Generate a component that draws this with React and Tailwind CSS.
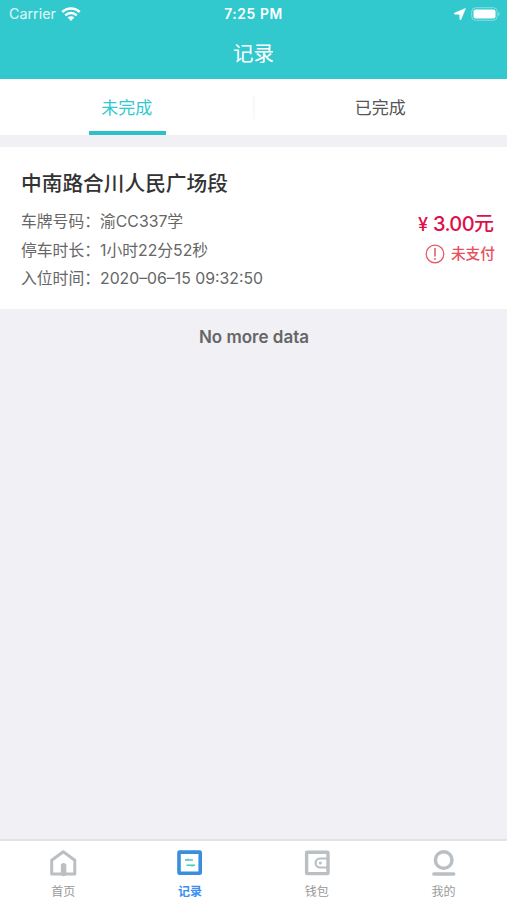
import React, { useState } from "react";

const WifiIcon = () => (
  <svg width="20" height="14" viewBox="0 0 20 14" fill="none" stroke="currentColor" strokeWidth="2.5">
    <path d="M1.3 5a12.3 12.3 0 0 1 17.4 0"></path>
    <path d="M4.3 8.3a8 8 0 0 1 11.4 0"></path>
    <path d="M6.7 10.6a4.7 4.7 0 0 1 6.6 0L10 13.9z" fill="currentColor" stroke="none"></path>
  </svg>
);

const LocationIcon = () => (
  <svg width="12" height="12" viewBox="0 0 12 12" fill="currentColor">
    <path d="M11.7 0.3 0.4 5c-.5.3-.4 1.2.2 1.2l5 .2.2 5c0 .6.9.7 1.2.2z" stroke="currentColor" strokeWidth="0.4"></path>
  </svg>
);

const BatteryIcon = () => (
  <svg width="30" height="14" viewBox="0 0 30 14" fill="none">
    <rect x="0.7" y="0.7" width="25.6" height="12.6" rx="4" stroke="#fff" strokeOpacity="0.4"></rect>
    <rect x="2.5" y="2.5" width="22" height="9" rx="2" fill="#fff"></rect>
    <path d="M27.5 5c1.6.6 1.6 3.4 0 4z" fill="#fff" fillOpacity="0.5"></path>
  </svg>
);

const WarningIcon = () => (
  <svg width="20" height="20" viewBox="0 0 20 20" fill="none" stroke="#e8505b" strokeWidth="1.2">
    <circle cx="10" cy="10" r="8.8"></circle>
    <path d="M10 4v8.5" strokeWidth="1.5"></path>
    <circle cx="10" cy="14.9" r="0.9" fill="#e8505b" stroke="none"></circle>
  </svg>
);

const HomeIcon = () => (
  <svg width="28" height="28" viewBox="0 0 28 28" fill="none" stroke="#b9bfc3" strokeWidth="3" strokeLinejoin="round">
    <path d="M2.7 11.2 14.3 2.8l11.5 8.4V25H2.7z"></path>
    <path d="M14.6 24.5v-7.8" strokeWidth="5.5" strokeLinecap="round"></path>
  </svg>
);

const RecordIcon = () => (
  <svg width="28" height="28" viewBox="0 0 28 28" fill="none">
    <rect x="3" y="3.1" width="21.2" height="21.2" rx="0.5" stroke="#3a8fdc" strokeWidth="3.6"></rect>
    <path d="M9 11h8" stroke="#45cbb9" strokeWidth="1.5"></path>
    <path d="M9 11l3.5-1.700v1.700z" fill="#45cbb9"></path>
    <path d="M10.500 16.200h8.500" stroke="#45cbb9" strokeWidth="1.5"></path>
    <path d="M19 16.200l-3.500 1.900v-1.900z" fill="#45cbb9"></path>
  </svg>
);

const WalletIcon = () => (
  <svg width="28" height="28" viewBox="0 0 28 28" fill="none" stroke="#b9bfc3">
    <rect x="3.6" y="3.2" width="21.4" height="21.4" rx="0.5" strokeWidth="3.4"></rect>
    <path d="M25 9.5h-7.900a4.500 4.500 0 0 0 0 9h7.900" strokeWidth="2.2"></path>
    <circle cx="17.3" cy="14" r="1.6" fill="#b9bfc3" stroke="none"></circle>
  </svg>
);

const UserIcon = () => (
  <svg width="28" height="28" viewBox="0 0 28 28" fill="none" stroke="#b9bfc3" strokeWidth="3.5">
    <circle cx="13.7" cy="11" r="8.3"></circle>
    <path d="M3.900 25h19.800" strokeLinecap="round"></path>
  </svg>
);

const tabs = ["未完成", "已完成"];

const navItems = [
  { label: "首页", icon: HomeIcon },
  { label: "记录", icon: RecordIcon },
  { label: "钱包", icon: WalletIcon },
  { label: "我的", icon: UserIcon },
];

const details = [
  { label: "车牌号码：", value: "渝CC337学" },
  { label: "停车时长：", value: "1小时22分52秒" },
  { label: "入位时间：", value: "2020–06–15 09:32:50" },
];

const App = () => {
  const [tab, setTab] = useState("未完成");
  const [page, setPage] = useState("记录");

  return (
    <div className="flex h-screen w-full flex-col overflow-hidden bg-[#f0f0f5] font-['Inter','Noto_Sans_CJK_SC',sans-serif] text-[#555]">
      {/* Header */}
      <header className="h-[79px] shrink-0 bg-[#31c9ce] text-white">
        <div className="grid h-[27px] grid-cols-[1fr_auto_1fr] items-center pl-[9px] pr-[6px]">
          <div className="flex items-center gap-[5px] text-[14.3px] text-white/85">
            <span>Carrier</span>
            <span className="text-white"><WifiIcon /></span>
          </div>
          <div className="mr-[3px] pt-px text-center text-[13.8px] font-semibold tracking-[0.6px]">7:25 PM</div>
          <div className="flex items-center justify-end gap-[5px]">
            <LocationIcon />
            <BatteryIcon />
          </div>
        </div>
        <h1 className="pt-px text-center text-[20.5px] leading-[52px]">记录</h1>
      </header>

      {/* Tabs */}
      <div className="flex h-[56px] shrink-0 items-center bg-white">
        {tabs.map((name, index) => (
          <React.Fragment key={name}>
            {index > 0 && <span className="-mx-px h-[24px] w-[2px] bg-[#f8f8fa]"></span>}
            <button
              onClick={() => setTab(name)}
              className={`flex h-full flex-1 flex-col items-center justify-between text-[17px] ${
                tab === name ? "text-[#31c9ce]" : "text-[#555]"
              }`}
            >
              <span className="h-[52px] leading-[58px]">{name}</span>
              <span className={`ml-px h-[4px] w-[77px] shrink-0 ${tab === name ? "bg-[#2bc1c6]" : ""}`}></span>
            </button>
          </React.Fragment>
        ))}
      </div>

      {/* Record card */}
      <section className="mt-[12px] flex h-[162px] shrink-0 justify-between bg-white pl-[21px] pr-[12px]">
        <div>
          <h2 className="mt-[21px] text-[20.7px] leading-[32px] font-medium text-[#333]">中南路合川人民广场段</h2>
          <div className="mt-[8px] text-[15.8px] leading-[28.5px] text-[#666]">
            {details.map((item) => (
              <p key={item.label} className="whitespace-nowrap">
                {item.label}
                {item.value}
              </p>
            ))}
          </div>
        </div>
        <div className="flex flex-col items-end pt-[62px]">
          <p className="mr-px text-[20px] leading-[30px] font-medium text-[#de0f4b]">
            <span className="mr-[5px] text-[18px]">¥</span>
            <span className="tracking-[-0.6px]">3.00</span>元
          </p>
          <p className="-mt-px flex items-center gap-[6px] text-[14.7px] leading-[30px] font-medium text-[#e8505b]">
            <WarningIcon />
            未支付
          </p>
        </div>
      </section>

      <p className="pt-[15px] pl-px text-center text-[17px] leading-[26px] font-semibold text-[#666]">No more data</p>

      {/* Bottom navigation */}
      <nav className="mt-auto grid h-[61px] shrink-0 grid-cols-4 border-t-2 border-[#e2e2e6] bg-white">
        {navItems.map(({ label, icon: Icon }) => (
          <button
            key={label}
            onClick={() => setPage(label)}
            className={`flex flex-col items-center pt-[8px] text-[12px] ${
              page === label ? "font-bold text-[#3a8ff0]" : "text-[#999]"
            }`}
          >
            <Icon />
            <span className="mt-[6px] leading-[18px]">{label}</span>
          </button>
        ))}
      </nav>
    </div>
  );
};

export default App;
